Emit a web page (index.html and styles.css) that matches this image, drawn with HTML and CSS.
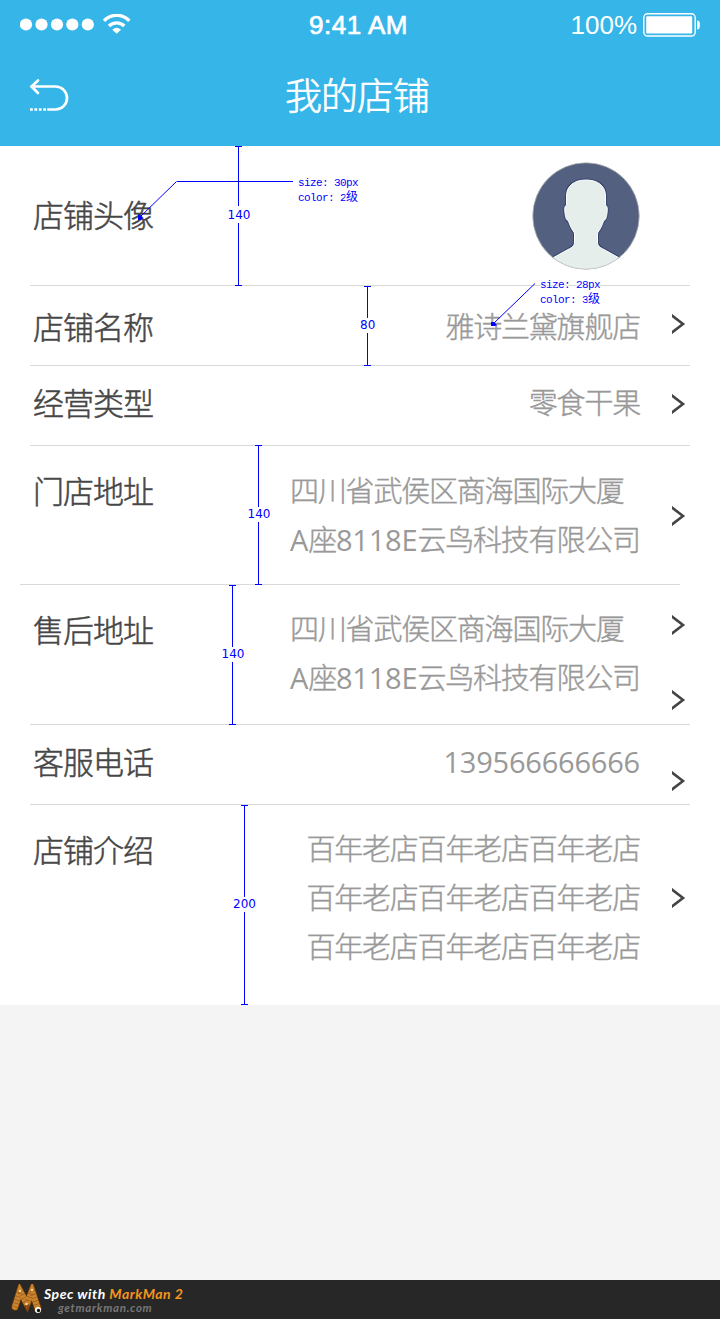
FILE: index.html
```html
<!DOCTYPE html>
<html lang="zh-CN">
<head>
<meta charset="utf-8">
<title>我的店铺</title>
<link rel="stylesheet" href="styles.css">
</head>
<body>
<div class="page">
  <header class="header">
    <div class="status">
      <svg class="signal" width="112" height="22" viewBox="0 0 112 22" fill="#fff">
        <circle cx="6" cy="10.5" r="6.1"/><circle cx="21.5" cy="10.5" r="6.1"/><circle cx="37" cy="10.5" r="6.1"/><circle cx="52.3" cy="10.5" r="6.1"/><circle cx="67.8" cy="10.5" r="6.1"/>
        <g fill="none" stroke="#fff" stroke-width="3.4"><path d="M84 6.8A17.5 17.5 0 0 1 109.3 6.8"/><path d="M89 12A11 11 0 0 1 104.300 12"/></g>
        <path d="M92.300 15.700Q96.600 12 101 15.700L96.600 19.800Z"/>
      </svg>
      <span class="time">9:41 AM</span>
      <span class="power"><span class="percent">100%</span>
        <svg width="58" height="24" viewBox="0 0 58 24"><rect x=".8" y=".8" width="51.400" height="22.200" rx="3.800" fill="none" stroke="#fff" stroke-width="1.400"/><rect x="3.200" y="3.200" width="46" height="17.200" rx="1" fill="#fff"/><path d="M54 7.500q2.800 0 2.800 3v3q0 3-2.800 3z" fill="#fff"/></svg>
      </span>
    </div>
    <div class="titlebar">
      <svg class="back" width="42" height="36" viewBox="0 0 42 36" fill="none" stroke="#fff" stroke-width="2.700"><path stroke-linecap="round" d="M9 2.500L2.500 8.500L9 15M3 8.500H26.500A11.500 11.500 0 0 1 26.500 31.500H19.500"/><path d="M1 31.500H19" stroke-dasharray="2.800 1.600"/></svg>
      <h1 class="title">我的店铺</h1>
    </div>
  </header>

  <main class="list">
    <section class="row row-avatar">
      <span class="label">店铺头像</span>
      <svg class="avatar" width="108" height="108" viewBox="0 0 108 108">
        <defs><clipPath id="disc"><circle cx="54" cy="54" r="53.300"/></clipPath></defs>
        <g clip-path="url(#disc)"><rect width="108" height="108" fill="#53607f"/>
        <path d="M54 18C42 18 34.500 24 34.500 34V43C32.500 44 32.500 47 33 51C33.500 56 34.500 58 36.500 59C38 64 40 67.500 42.500 71V80C42.500 84 40 85.500 36 87.500L10 102V112H98V102L72 87.500C68 85.500 65.500 84 65.500 80V71C68 67.500 70 64 71.500 59C73.500 58 74.500 56 75 51C75.500 47 75.500 44 73.500 43V34C73.500 24 66 18 54 18Z" fill="#e6eeec" stroke="#35456e" stroke-width="3"/>
        <path d="M54 18C42 18 34.500 24 34.500 34V43C32.500 44 32.500 47 33 51C33.500 56 34.500 58 36.500 59C38 64 40 67.500 42.500 71V80C42.500 84 40 85.500 36 87.500L10 102V112H98V102L72 87.500C68 85.500 65.500 84 65.500 80V71C68 67.500 70 64 71.500 59C73.500 58 74.500 56 75 51C75.500 47 75.500 44 73.500 43V34C73.500 24 66 18 54 18Z" fill="#e6eeec" stroke="#fff" stroke-width="1"/></g>
        <circle cx="54" cy="54" r="53.200" fill="none" stroke="#bbb" stroke-width=".7"/>
      </svg>
    </section>
    <section class="row row-name">
      <span class="label">店铺名称</span><span class="value">雅诗兰黛旗舰店</span>
      <span class="arrows"><svg class="chevron" viewBox="0 0 14 20"><path d="M-2 0L11 10L-2 20"/></svg></span>
    </section>
    <section class="row row-type">
      <span class="label">经营类型</span><span class="value">零食干果</span>
      <span class="arrows"><svg class="chevron" viewBox="0 0 14 20"><path d="M-2 0L11 10L-2 20"/></svg></span>
    </section>
    <section class="row row-store">
      <span class="label">门店地址</span><span class="value address">四川省武侯区商海国际大厦<br><span class="latin">A</span>座<span class="latin">8118E</span>云鸟科技有限公司</span>
      <span class="arrows"><svg class="chevron" viewBox="0 0 14 20"><path d="M-2 0L11 10L-2 20"/></svg></span>
    </section>
    <section class="row row-service">
      <span class="label">售后地址</span><span class="value address">四川省武侯区商海国际大厦<br><span class="latin">A</span>座<span class="latin">8118E</span>云鸟科技有限公司</span>
      <span class="arrows"><svg class="chevron" viewBox="0 0 14 20"><path d="M-2 0L11 10L-2 20"/></svg><svg class="chevron" viewBox="0 0 14 20"><path d="M-2 0L11 10L-2 20"/></svg></span>
    </section>
    <section class="row row-phone">
      <span class="label">客服电话</span><span class="value phone">139566666666</span>
      <span class="arrows"><svg class="chevron" viewBox="0 0 14 20"><path d="M-2 0L11 10L-2 20"/></svg></span>
    </section>
    <section class="row row-intro">
      <span class="label">店铺介绍</span><span class="value">百年老店百年老店百年老店<br>百年老店百年老店百年老店<br>百年老店百年老店百年老店</span>
      <span class="arrows"><svg class="chevron" viewBox="0 0 14 20"><path d="M-2 0L11 10L-2 20"/></svg></span>
    </section>
  </main>

  <footer class="footer">
    <svg class="logo" width="34" height="32" viewBox="0 0 34 32" fill="none" stroke-linecap="round">
      <g stroke="#6b3b08" stroke-width="7.500"><path d="M5 23L10 7L17 20L22 7L28 25"/></g>
      <g stroke="#c8832e" stroke-width="6"><path d="M5 23L10 7L17 20M17 20L22 7L28 25"/></g>
      <path d="M5 23L10 7L17 20L22 7L28 25" stroke="#8b4d11" stroke-width="6" stroke-dasharray=".5 3" stroke-linecap="butt"/>
      <g fill="#ffd892"><circle cx="10" cy="7" r="1.200"/><circle cx="16.500" cy="20" r="1.300"/><circle cx="22" cy="6" r="1.200"/></g>
      <circle cx="28" cy="26" r="3" fill="#fff"/><circle cx="28.500" cy="26.500" r="1.700" fill="#111"/>
    </svg>
    <div class="credit"><div class="spec">Spec with <span class="brand">MarkMan 2</span></div><div class="site">getmarkman.com</div></div>
  </footer>

  <svg class="notes" width="720" height="1319" viewBox="0 0 720 1319">
    <g class="rules">
      <path d="M238.500 146V206M238.500 223V286M235 146.500h7M235 285.500h7"/>
      <path d="M367.500 286V318M367.500 333V366M364 286.500h7M364 365.500h7"/>
      <path d="M258.500 445V507M258.500 522V585M255 445.500h7M255 584.500h7"/>
      <path d="M232.500 585V647M232.500 662V725M229 585.500h7M229 724.500h7"/>
      <path d="M244.500 805V897M244.500 912V1005M241 805.500h7M241 1004.500h7"/>
      <path d="M293 181.500H176.500"/>
      <path class="slant" d="M176.500 181.500L140 217"/>
      <path class="slant" d="M535 283.500L493 324"/>
    </g>
    <path class="tip" d="M138 215l1-1 4 4-2 2-3 0zM491 322h3l3 3-2 1-4 0z"/>
    <g class="sizes"><text x="227.500" y="219">140</text><text x="360" y="329">80</text><text x="247.500" y="518">140</text><text x="221.500" y="658">140</text><text x="233" y="908">200</text></g>
    <g class="hints"><text x="298" y="186">size: 30px</text><text x="298" y="201">color: 2<tspan class="han">级</tspan></text><text x="540" y="288">size: 28px</text><text x="540" y="303">color: 3<tspan class="han">级</tspan></text></g>
  </svg>
</div>
</body>
</html>
```
FILE: styles.css
```css
body { margin: 0; background: #f4f4f4; }
.page {
  position: relative;
  width: 720px;
  height: 1319px;
  display: flex;
  flex-direction: column;
  overflow: hidden;
  font-family: "Noto Sans CJK SC", sans-serif;
}
.header { height: 146px; background: #35b5e8; color: #fff; }
.status {
  height: 50px;
  box-sizing: border-box;
  padding: 0 19px 0 20px;
  display: grid;
  grid-template-columns: 1fr auto 1fr;
  align-items: center;
  font: 26px/50px "Liberation Sans", sans-serif;
}
.signal { margin-top: -1px; }
.time { -webkit-text-stroke: .7px #fff; letter-spacing: .5px; margin: 0 4px 0 0; }
.power { display: flex; align-items: center; justify-content: flex-end; gap: 6px; }
.power svg { flex: none; }
.titlebar {
  height: 96px;
  display: grid;
  grid-template-columns: 1fr auto 1fr;
  align-items: center;
}
.back { margin: -5px 0 0 29px; }
.title { margin: -8px 6px 0 0; font-size: 37px; line-height: 50px; font-weight: 300; letter-spacing: -1px; -webkit-text-stroke: .7px currentColor; }

.list { background: #fff; height: 859px; }
.row {
  box-sizing: border-box;
  margin: 0 30px;
  padding: 0 0 0 3px;
  border-bottom: 1px solid #d9d9d9;
  display: grid;
  grid-template-columns: 130px 477px 50px;
}
.label { font-size: 31px; line-height: 38px; letter-spacing: -1px; color: #464646; font-weight: 300; white-space: nowrap; -webkit-text-stroke: .5px currentColor; }
.value { font-size: 29px; line-height: 49px; letter-spacing: -1.2px; color: #999; font-weight: 300; text-align: right; white-space: nowrap; -webkit-text-stroke: .4px currentColor; }
.address { text-align: left; padding-left: 127px; }
.latin, .phone { font-family: "Open Sans", "Noto Sans", sans-serif; font-weight: 400; letter-spacing: -.2px; -webkit-text-stroke: 0; }
.latin { line-height: 0; }
.arrows { display: flex; flex-direction: column; gap: 55px; padding-left: 32px; }
.chevron { width: 14px; height: 20px; fill: none; stroke: #444; stroke-width: 2.6; overflow: hidden; }

.row-avatar { height: 140px; }
.row-avatar .label { margin-top: 49px; }
.avatar { margin: 16px 0 0 369px; }
.row-name, .row-type, .row-phone { height: 80px; }
.row-name .label { margin-top: 21px; }
.row-name .value { margin-top: 15px; }
.row-name .arrows { margin-top: 28px; }
.row-type .label { margin-top: 17px; }
.row-type .value { margin-top: 11px; }
.row-type .arrows { margin-top: 28px; }
.row-store { height: 139px; margin: 0 40px 0 20px; padding-left: 13px; }
.row-store .label { margin-top: 25px; }
.row-store .value { margin-top: 19px; }
.row-store .arrows { margin-top: 60px; }
.row-service { height: 140px; }
.row-service .label { margin-top: 25px; }
.row-service .value { margin-top: 18px; }
.row-service .arrows { margin-top: 30px; }
.row-phone .label { margin-top: 17px; }
.row-phone .value { margin-top: 12px; }
.row-phone .arrows { margin-top: 46px; }
.row-intro { height: 200px; border-bottom: 0; }
.row-intro .label { margin-top: 25px; }
.row-intro .value { margin-top: 18px; }
.row-intro .arrows { margin-top: 83px; }

.footer { margin-top: auto; height: 39px; background: #272727; display: flex; }
.logo { margin: 4px 0 0 10px; flex: none; }
.credit { padding-top: 5px; font-family: Lato, sans-serif; font-style: italic; font-weight: 700; white-space: nowrap; }
.spec { color: #fff; font-size: 14px; line-height: 17px; letter-spacing: .5px; }
.brand { color: #f7941d; }
.site { color: #777; font-size: 11.5px; line-height: 13px; letter-spacing: .7px; padding-left: 14px; margin-top: -1px; }

.notes { position: absolute; left: 0; top: 0; }
.rules { fill: none; stroke: #00f; stroke-width: 1; shape-rendering: crispEdges; }
.slant { shape-rendering: auto; }
.tip { fill: #00f; }
.sizes { font: 12px "DejaVu Sans", sans-serif; fill: #00f; }
.hints { font: 11px "Liberation Mono", monospace; letter-spacing: -.6px; fill: #00f; stroke: #fff; stroke-width: 2px; paint-order: stroke; white-space: pre; }
.han { font: 12px "Noto Sans CJK SC", sans-serif; }
```
